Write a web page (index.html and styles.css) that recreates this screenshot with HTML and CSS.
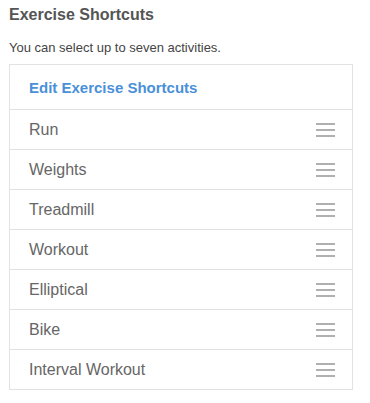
FILE: index.html
```html
<!DOCTYPE html>
<html>
<head>
<meta charset="utf-8">
<link rel="stylesheet" href="styles.css">
</head>
<body>
<div class="page">
  <h1 class="title">Exercise Shortcuts</h1>
  <p class="subtitle">You can select up to seven activities.</p>
  <div class="box">
    <div class="box-head">Edit Exercise Shortcuts</div>
    <ul class="list">
      <li class="row"><span>Run</span><span class="handle"><i></i><i></i><i></i></span></li>
      <li class="row"><span>Weights</span><span class="handle"><i></i><i></i><i></i></span></li>
      <li class="row"><span>Treadmill</span><span class="handle"><i></i><i></i><i></i></span></li>
      <li class="row"><span>Workout</span><span class="handle"><i></i><i></i><i></i></span></li>
      <li class="row"><span>Elliptical</span><span class="handle"><i></i><i></i><i></i></span></li>
      <li class="row"><span>Bike</span><span class="handle"><i></i><i></i><i></i></span></li>
      <li class="row"><span>Interval Workout</span><span class="handle"><i></i><i></i><i></i></span></li>
    </ul>
  </div>
</div>
</body>
</html>
```
FILE: styles.css
```css
html, body {
  margin: 0;
  padding: 0;
  background: #fff;
}
.page {
  padding: 5px 17px 0 9px;
  font-family: "Liberation Sans", Arial, sans-serif;
}
.title {
  margin: 0;
  font-size: 16px;
  font-weight: bold;
  color: #555;
  line-height: 20px;
}
.subtitle {
  margin: 15px 0 0;
  font-size: 13px;
  color: #444;
  line-height: 16px;
}
.box {
  margin-top: 8px;
  border: 1px solid #e2e2e2;
}
.box-head {
  height: 44px;
  display: flex;
  align-items: center;
  padding-left: 19px;
  font-size: 15px;
  font-weight: bold;
  color: #4a90d9;
}
.list {
  list-style: none;
  margin: 0;
  padding: 0;
}
.row {
  height: 39px;
  border-top: 1px solid #e2e2e2;
  display: flex;
  align-items: center;
  justify-content: space-between;
  padding: 0 17px 0 19px;
  font-size: 16px;
  color: #666;
}
.handle {
  display: flex;
  flex-direction: column;
  gap: 4px;
  width: 19px;
}
.handle i {
  display: block;
  height: 2px;
  background: #b0b0b0;
}
```
